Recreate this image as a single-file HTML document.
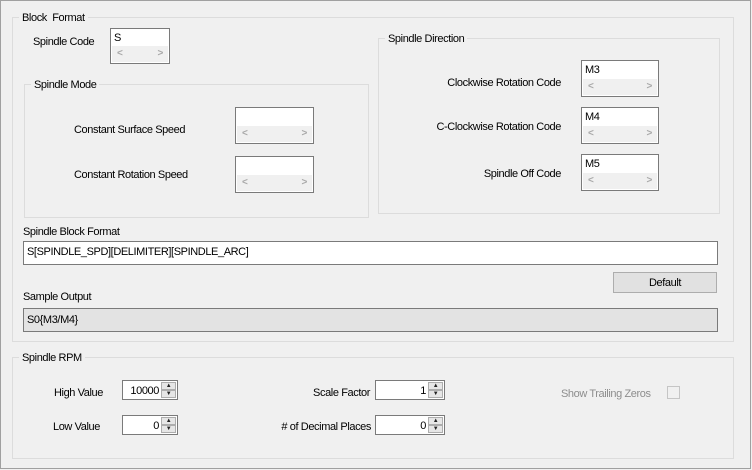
<!DOCTYPE html>
<html><head><meta charset="utf-8"><style>
*{box-sizing:border-box;margin:0;padding:0}
body{width:752px;height:470px;background:#f0f0f0;font-family:"Liberation Sans",Arial,sans-serif;font-size:11px;color:#000;position:relative;overflow:hidden;letter-spacing:-0.4px}
.a{position:absolute}
.l{margin-top:1px}
.outer{left:0;top:0;width:751px;height:469px;border:1px solid #a0a0a0}
.g{position:absolute;border:1px solid #dcdcdc}
.gl{position:absolute;background:#f0f0f0;padding:0 3px;top:-7px;left:6px;line-height:14px}
.tb{position:absolute;background:#fff;border:1px solid #7a7a7a}
.tb .t{position:absolute;left:3px;top:3px;line-height:13px}
.tb .sb{position:absolute;left:1px;right:1px;bottom:1px;height:16px;background:#f0f0f0;color:#a8a8a8;font-size:10px;font-weight:bold}
.sb span{position:absolute;top:2px}
.sp{position:absolute;background:#fff;border:1px solid #7a7a7a;height:20px;width:56px}
.sp .v{position:absolute;right:18px;top:4px;line-height:13px}
.sp .b{position:absolute;right:1px;width:15px;height:8px;background:#e6e6e6;border:1px solid #adadad;font-size:6px;line-height:6px;text-align:center;color:#222}
.r{text-align:right}
</style></head><body>
<div class="a outer"></div>

<div class="g" style="left:12px;top:17px;width:722px;height:325px">
 <div class="gl">Block&nbsp; Format</div>
</div>
<div class="a l" style="left:33px;top:35px">Spindle Code</div>
<div class="tb" style="left:110px;top:28px;width:60px;height:36px"><div class="t">S</div><div class="sb"><span style="left:5px">&lt;</span><span style="right:5px">&gt;</span></div></div>

<div class="g" style="left:24px;top:84px;width:345px;height:134px"><div class="gl">Spindle Mode</div></div>
<div class="a l" style="left:74px;top:123px">Constant Surface Speed</div>
<div class="tb" style="left:235px;top:107px;width:79px;height:37px"><div class="sb"><span style="left:5px">&lt;</span><span style="right:5px">&gt;</span></div></div>
<div class="a l" style="left:74px;top:168px">Constant Rotation Speed</div>
<div class="tb" style="left:235px;top:156px;width:79px;height:37px"><div class="sb"><span style="left:5px">&lt;</span><span style="right:5px">&gt;</span></div></div>

<div class="g" style="left:378px;top:38px;width:342px;height:176px"><div class="gl">Spindle Direction</div></div>
<div class="a r l" style="left:380px;width:181px;top:76px">Clockwise Rotation Code</div>
<div class="tb" style="left:581px;top:60px;width:78px;height:37px"><div class="t">M3</div><div class="sb"><span style="left:5px">&lt;</span><span style="right:5px">&gt;</span></div></div>
<div class="a r l" style="left:380px;width:181px;top:120px">C-Clockwise Rotation Code</div>
<div class="tb" style="left:581px;top:107px;width:78px;height:37px"><div class="t">M4</div><div class="sb"><span style="left:5px">&lt;</span><span style="right:5px">&gt;</span></div></div>
<div class="a r l" style="left:380px;width:181px;top:167px">Spindle Off Code</div>
<div class="tb" style="left:581px;top:154px;width:78px;height:37px"><div class="t">M5</div><div class="sb"><span style="left:5px">&lt;</span><span style="right:5px">&gt;</span></div></div>

<div class="a l" style="left:23px;top:225px">Spindle Block Format</div>
<div class="tb" style="left:23px;top:241px;width:695px;height:24px"><div class="t" style="top:4px">S[SPINDLE_SPD][DELIMITER][SPINDLE_ARC]</div></div>
<div class="a" style="left:613px;top:272px;width:104px;height:21px;background:#e1e1e1;border:1px solid #adadad;text-align:center;line-height:20px">Default</div>
<div class="a l" style="left:23px;top:290px">Sample Output</div>
<div class="a" style="left:23px;top:308px;width:695px;height:24px;background:#e3e3e3;border:1px solid #7a7a7a;padding:5px 3px;line-height:13px">S0{M3/M4}</div>

<div class="g" style="left:12px;top:357px;width:722px;height:102px"><div class="gl">Spindle RPM</div></div>
<div class="a l" style="left:54px;top:386px">High Value</div>
<div class="sp" style="left:122px;top:380px"><div class="v">10000</div><div class="b" style="top:1px">▲</div><div class="b" style="top:9px">▼</div></div>
<div class="a l" style="left:53px;top:420px">Low Value</div>
<div class="sp" style="left:122px;top:415px"><div class="v">0</div><div class="b" style="top:1px">▲</div><div class="b" style="top:9px">▼</div></div>
<div class="a r l" style="left:250px;width:120px;top:386px">Scale Factor</div>
<div class="sp" style="left:375px;top:380px;width:70px"><div class="v">1</div><div class="b" style="top:1px">▲</div><div class="b" style="top:9px">▼</div></div>
<div class="a r l" style="left:250px;width:121px;top:420px"># of Decimal Places</div>
<div class="sp" style="left:375px;top:415px;width:70px"><div class="v">0</div><div class="b" style="top:1px">▲</div><div class="b" style="top:9px">▼</div></div>
<div class="a l" style="left:561px;top:387px;color:#8d8d8d">Show Trailing Zeros</div>
<div class="a" style="left:667px;top:386px;width:13px;height:13px;border:1px solid #c5c5c5;background:#f0f0f0"></div>
</body></html>
